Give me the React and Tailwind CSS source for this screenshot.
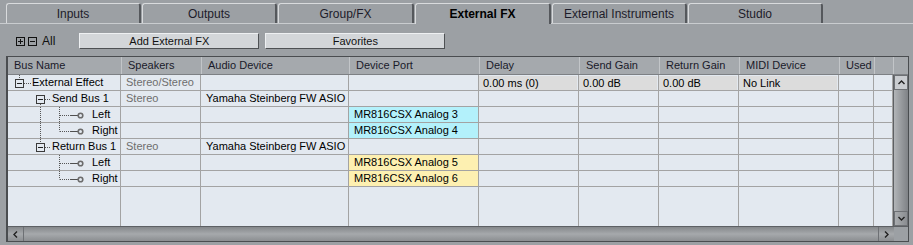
import React from 'react';

const tabs = [
    { label: 'Inputs', w: 'w-[135px]' },
    { label: 'Outputs', w: 'w-[135px]' },
    { label: 'Group/FX', w: 'w-[136px]' },
    { label: 'External FX', w: 'w-[136px]', active: true },
    { label: 'External Instruments', w: 'w-[135px]' },
    { label: 'Studio', w: 'w-[135px]' },
];

const columns = [
    { key: 'bus', label: 'Bus Name', w: 'w-[114px]' },
    { key: 'speakers', label: 'Speakers', w: 'w-[80px]' },
    { key: 'device', label: 'Audio Device', w: 'w-[148px]' },
    { key: 'port', label: 'Device Port', w: 'w-[130px]' },
    { key: 'delay', label: 'Delay', w: 'w-[100px]' },
    { key: 'send', label: 'Send Gain', w: 'w-[80px]' },
    { key: 'ret', label: 'Return Gain', w: 'w-[80px]' },
    { key: 'midi', label: 'MIDI Device', w: 'w-[100px]' },
    { key: 'used', label: 'Used', w: 'w-[35px]' },
    { key: 'extra', label: '', w: 'w-[19px]' },
];

const rows = [
    { tree: 'root', bus: 'External Effect', speakers: 'Stereo/Stereo', delay: '0.00 ms (0)', send: '0.00 dB', ret: '0.00 dB', midi: 'No Link', shaded: true },
    { tree: 'busFirst', bus: 'Send Bus 1', speakers: 'Stereo', device: 'Yamaha Steinberg FW ASIO' },
    { tree: 'leafMidCont', bus: 'Left', port: 'MR816CSX Analog 3', portColor: 'bg-[#b3f1fb]' },
    { tree: 'leafLastCont', bus: 'Right', port: 'MR816CSX Analog 4', portColor: 'bg-[#b3f1fb]' },
    { tree: 'busLast', bus: 'Return Bus 1', speakers: 'Stereo', device: 'Yamaha Steinberg FW ASIO' },
    { tree: 'leafMid', bus: 'Left', port: 'MR816CSX Analog 5', portColor: 'bg-[#fdf0b1]' },
    { tree: 'leafLast', bus: 'Right', port: 'MR816CSX Analog 6', portColor: 'bg-[#fdf0b1]' },
];

const Dotted = (props) => <line {...props} stroke="#555" strokeWidth="1" strokeDasharray="1 1" />;

const MinusBox = ({ x }) => (
    <>
        <rect x={x + 0.5} y="4.5" width="8" height="8" fill="#e3e9f0" stroke="#3a3a3a" />
        <path d={`M${x + 2} 8.5H${x + 7}`} stroke="#202020" />
    </>
);

const TreeIcon = ({ type }) => {
    if (type === 'root') {
        return (
            <svg width="24" height="15" className="shrink-0">
                <Dotted x1="11.5" y1="0" x2="11.5" y2="4" />
                <MinusBox x={7} />
                <Dotted x1="16" y1="8.5" x2="23" y2="8.5" />
            </svg>
        );
    }
    if (type === 'busFirst' || type === 'busLast') {
        return (
            <svg width="44" height="15" className="shrink-0">
                {type === 'busFirst'
                    ? <Dotted x1="32.5" y1="13" x2="32.5" y2="15" />
                    : <Dotted x1="32.5" y1="0" x2="32.5" y2="4" />}
                <MinusBox x={28} />
                <Dotted x1="37" y1="8.5" x2="43" y2="8.5" />
            </svg>
        );
    }
    const cont = type === 'leafMidCont' || type === 'leafLastCont';
    const last = type === 'leafLast' || type === 'leafLastCont';
    return (
        <svg width="84" height="15" className="shrink-0">
            {cont && <Dotted x1="32.5" y1="0" x2="32.5" y2="15" />}
            <Dotted x1="51.5" y1="0" x2="51.5" y2={last ? 8.5 : 15} />
            <Dotted x1="52" y1="8.5" x2="63" y2="8.5" />
            <path d="M63 8.5H70" stroke="#505050" />
            <circle cx="72.5" cy="8.5" r="2.3" fill="none" stroke="#6c6c6c" strokeWidth="1.6" />
        </svg>
    );
};

const Chevron = ({ d }) => (
    <svg width="9" height="9" viewBox="0 0 9 9">
        <path d={d} fill="none" stroke="#202020" strokeWidth="1.4" />
    </svg>
);

const App = () => {
    return (
        <div className="w-[913px] h-[245px] overflow-hidden bg-[#9ca0a4] font-['Liberation_Sans',_Arial,_sans-serif] text-[11px] text-[#111]">
            {/* Tabs */}
            <div className="flex h-[24px] pt-[3px] pl-[6px] gap-[1px] border-b border-[#c9cccf]">
                {tabs.map((t) => (
                    <div
                        key={t.label}
                        className={`${t.w} ${t.active ? 'h-[21px] font-bold text-black' : 'h-[20px] text-[#1c1c2a]'} bg-[#9ca0a4] border-t border-l border-[#d9dbdd] border-r-2 border-r-[#55585c] rounded-t-[3px] flex items-center justify-center text-[12px] leading-none`}
                    >
                        {t.label}
                    </div>
                ))}
            </div>

            {/* Toolbar */}
            <div className="flex items-center h-[32px] pt-[2px]">
                <div className="flex items-center ml-[16px] gap-[3px]">
                    <svg width="9" height="9">
                        <rect x="0.5" y="0.5" width="8" height="8" fill="none" stroke="#111" />
                        <path d="M2 4.5H7M4.5 2V7" stroke="#111" />
                    </svg>
                    <svg width="9" height="9">
                        <rect x="0.5" y="0.5" width="8" height="8" fill="none" stroke="#111" />
                        <path d="M2 4.5H7" stroke="#111" />
                    </svg>
                    <span className="text-[12px] ml-[2px] text-[#111]">All</span>
                </div>
                <button className="ml-[24px] w-[180px] h-[16px] bg-[#d3d6d9] border border-[#eef0f2] border-r-[#4e5154] border-b-[#4e5154] text-[11px] leading-none text-[#111]">
                    Add External FX
                </button>
                <button className="ml-[6px] w-[180px] h-[16px] bg-[#d3d6d9] border border-[#eef0f2] border-r-[#4e5154] border-b-[#4e5154] text-[11px] leading-none text-[#111]">
                    Favorites
                </button>
            </div>

            {/* Table frame */}
            <div className="ml-[6px] w-[903px] h-[186px] border border-[#4a4d50] border-l-2 flex flex-col">
                {/* Header */}
                <div className="flex h-[18px] shrink-0 bg-[#a5a9ad] border-b border-[#7d8084]">
                    {columns.map((c) => (
                        <div key={c.key} className={`${c.w} shrink-0 border-r border-[#c2c5c8] pl-[6px] leading-[17px] text-[#1a1a2a] whitespace-nowrap overflow-hidden`}>
                            {c.label}
                        </div>
                    ))}
                    <div className="flex-1" />
                </div>

                {/* Body */}
                <div className="flex h-[151px] shrink-0">
                    <div className="w-[885px] flex flex-col bg-[#e3e9f0]">
                        {rows.map((r, i) => (
                            <div key={i} className="flex h-[16px] shrink-0 border-b border-[#a3a3a3]">
                                <div className="w-[113px] shrink-0 border-r border-[#a3a3a3] flex items-center whitespace-nowrap overflow-hidden">
                                    <TreeIcon type={r.tree} />
                                    <span className="leading-[15px] text-black">{r.bus}</span>
                                </div>
                                <div className="w-[80px] shrink-0 border-r border-[#a3a3a3] pl-[5px] leading-[15px] text-[#6e6e6e] whitespace-nowrap">{r.speakers}</div>
                                <div className="w-[148px] shrink-0 border-r border-[#a3a3a3] pl-[5px] leading-[15px] text-black whitespace-nowrap">{r.device}</div>
                                <div className={`w-[130px] shrink-0 border-r border-[#a3a3a3] pl-[5px] leading-[15px] text-black whitespace-nowrap ${r.portColor || ''}`}>{r.port}</div>
                                {['delay', 'send', 'ret', 'midi'].map((k, j) => (
                                    <div key={k} className={`${['w-[100px]', 'w-[80px]', 'w-[80px]', 'w-[100px]'][j]} shrink-0 border-r border-[#a3a3a3] flex flex-col`}>
                                        {r.shaded ? (
                                            <div className="mt-[1px] h-[14px] mr-[1px] bg-[#dcdcdc] pl-[4px] leading-[14px] text-black whitespace-nowrap">{r[k]}</div>
                                        ) : null}
                                    </div>
                                ))}
                                <div className="w-[35px] shrink-0 border-r border-[#a3a3a3]" />
                                <div className="w-[19px] shrink-0 border-r border-[#a3a3a3]" />
                            </div>
                        ))}
                        <div className="flex flex-1">
                            {columns.map((c, i) => (
                                <div key={c.key} className={`${i === 0 ? 'w-[113px]' : c.w} shrink-0 border-r border-[#a3a3a3]`} />
                            ))}
                        </div>
                    </div>

                    {/* Vertical scrollbar */}
                    <div className="w-[15px] flex flex-col bg-gradient-to-r from-[#b2b5b8] to-[#7f8286] border-l border-[#5d6064]">
                        <div className="h-[15px] bg-[#c9ccd0] border border-[#6d7074] flex items-center justify-center">
                            <Chevron d="M1.5 6L4.5 3L7.5 6" />
                        </div>
                        <div className="flex-1" />
                        <div className="h-[15px] bg-gradient-to-r from-[#a9acaf] to-[#8a8d91] border border-[#6d7074] flex items-center justify-center">
                            <Chevron d="M1.5 3L4.5 6L7.5 3" />
                        </div>
                    </div>
                </div>

                {/* Horizontal scrollbar */}
                <div className="flex h-[15px] shrink-0 border-t border-[#5d6064]">
                    <div className="w-[886px] flex bg-gradient-to-b from-[#85888b] via-[#a6a9ac] to-[#8b8e91]">
                        <div className="w-[16px] border-r border-[#6d7074] flex items-center justify-center">
                            <Chevron d="M6 1.5L3 4.5L6 7.5" />
                        </div>
                        <div className="flex-1" />
                        <div className="w-[16px] border-l border-[#6d7074] flex items-center justify-center">
                            <Chevron d="M3 1.5L6 4.5L3 7.5" />
                        </div>
                    </div>
                    <div className="flex-1 bg-[#9ca0a4]" />
                </div>
            </div>
        </div>
    );
};

export default App;
